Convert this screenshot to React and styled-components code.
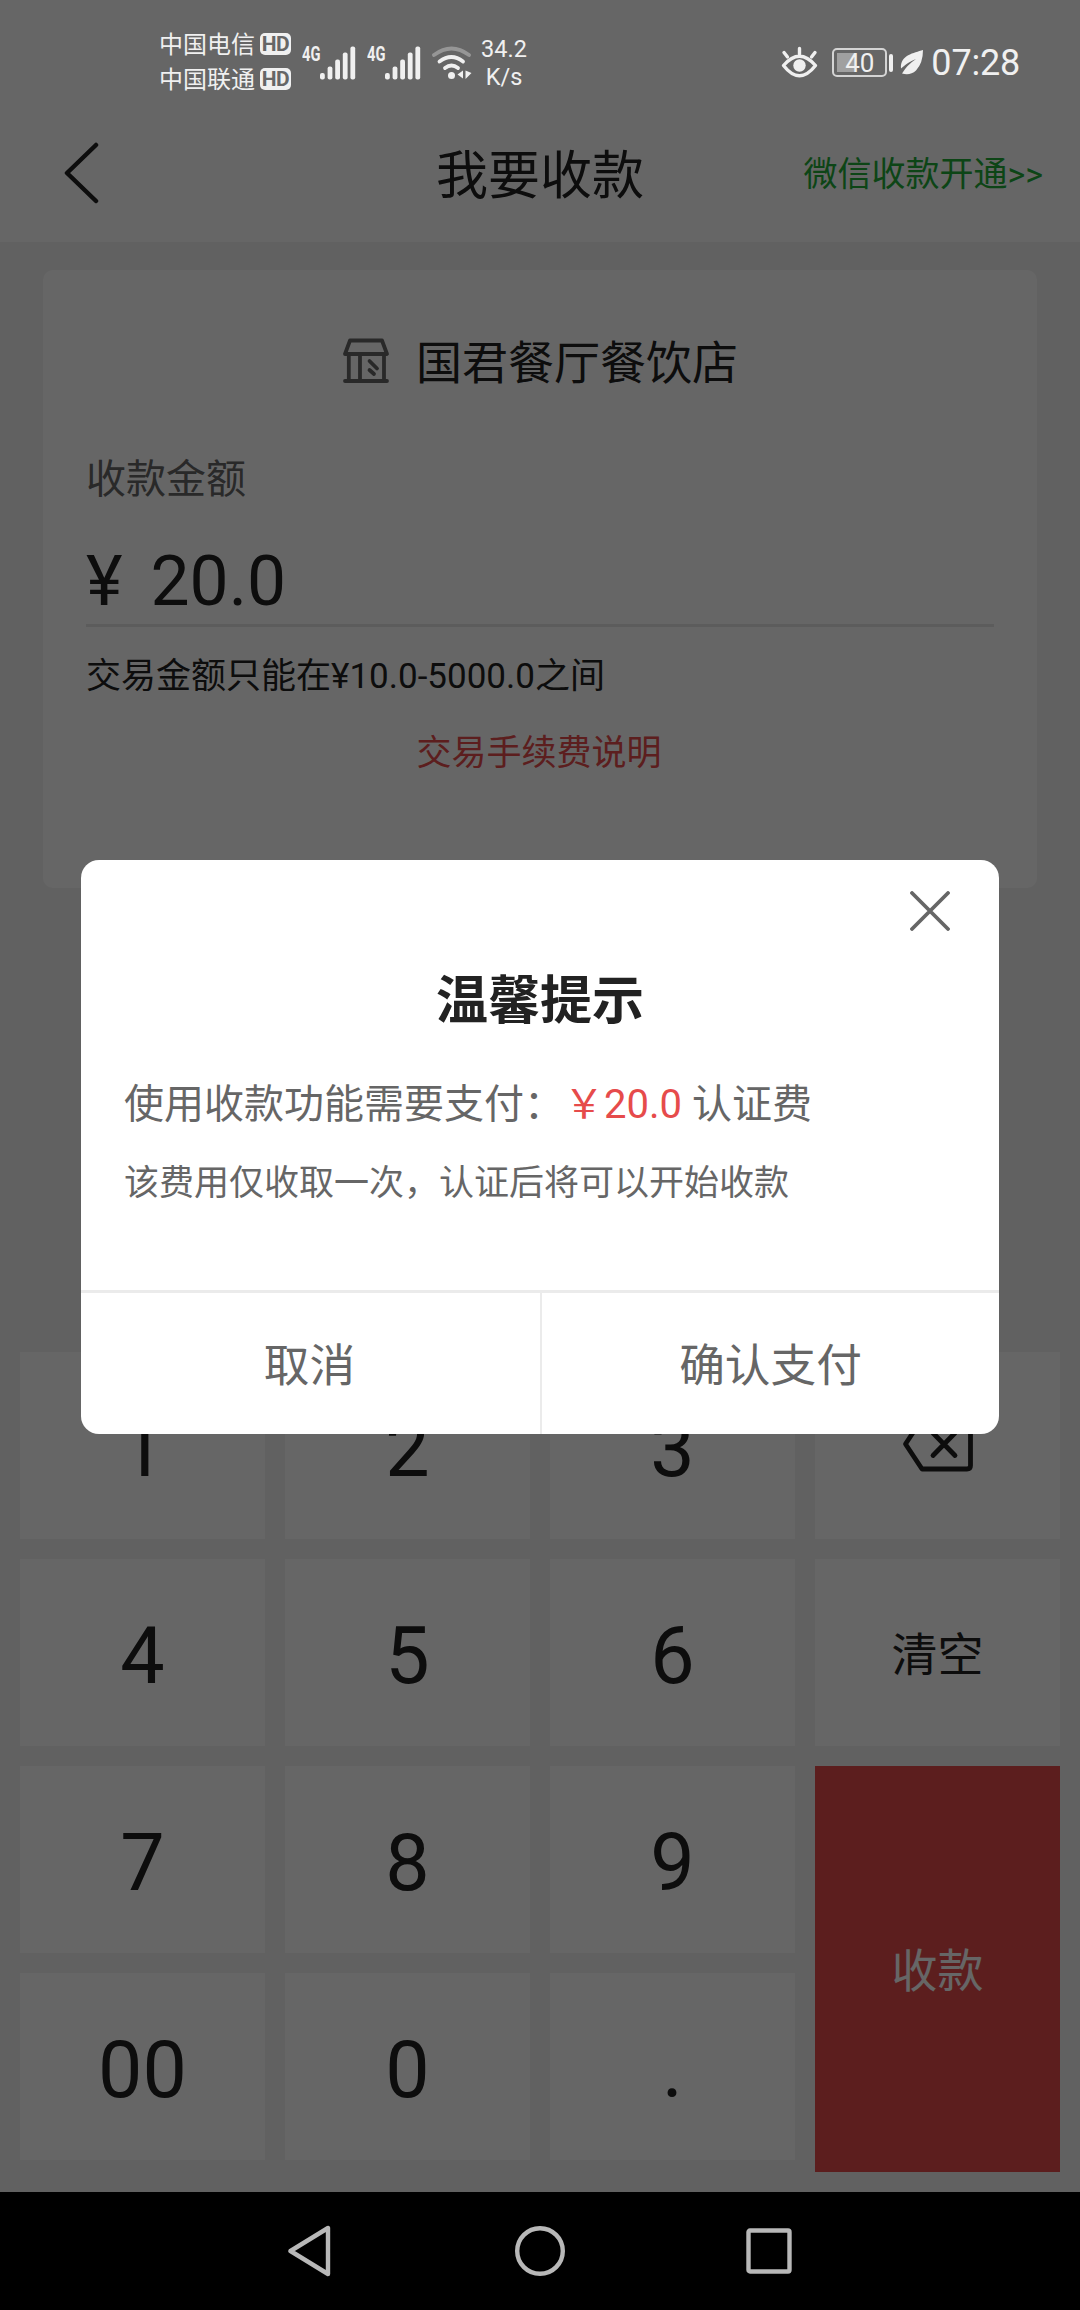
import styled, { createGlobalStyle, ThemeProvider } from 'styled-components'

const theme = {
  colors: {
    page: '#f3f3f3',
    card: '#ffffff',
    text: '#222222',
    muted: '#666666',
    line: '#ebebeb',
    red: '#e64b4b',
    link: '#22ac38',
    status: '#f0f0f0',
    nav: '#b8b8b8',
  },
  fonts: {
    body: "Roboto, 'Noto Sans CJK SC', sans-serif",
  },
}

const GlobalStyle = createGlobalStyle`
  * { box-sizing: border-box; }
  body { margin: 0; background: #000; }
  button { border: 0; padding: 0; margin: 0; background: none; font: inherit; color: inherit; }
`

const Screen = styled.div`
  position: relative;
  display: flex;
  flex-direction: column;
  width: 1080px;
  height: 2310px;
  overflow: hidden;
  background: ${p => p.theme.colors.page};
  color: ${p => p.theme.colors.text};
  font-family: ${p => p.theme.fonts.body};
`

/* page */

const Header = styled.header`
  display: grid;
  grid-template-columns: 1fr auto 1fr;
  align-items: center;
  height: 242px;
  padding: 104px 37px 0;
  background: ${p => p.theme.colors.card};
`

const Back = styled.button`
  display: flex;
  margin-left: 26px;
`

const HeaderTitle = styled.h1`
  margin: 0;
  padding-top: 7px;
  font-size: 52px;
  font-weight: 400;
  line-height: 60px;
`

const HeaderLink = styled.a`
  justify-self: end;
  padding-top: 2px;
  font-size: 34px;
  line-height: 40px;
  color: ${p => p.theme.colors.link};
`

const Card = styled.section`
  display: flex;
  flex-direction: column;
  height: 618px;
  margin: 28px 43px 0;
  padding: 63px 43px 0;
  border-radius: 10px;
  background: ${p => p.theme.colors.card};
`

const Shop = styled.div`
  display: flex;
  align-items: center;
  justify-content: center;
  gap: 26px;
  height: 56px;
  font-size: 46px;
`

const ShopName = styled.span`
  padding-top: 4px;
  line-height: 56px;
`

const Label = styled.div`
  margin-top: 66px;
  font-size: 40px;
  line-height: 50px;
  color: ${p => p.theme.colors.muted};
`

const Amount = styled.div`
  display: flex;
  gap: 28px;
  height: 90px;
  margin-top: 34px;
  padding-bottom: 4px;
  font-size: 69.500px;
  line-height: 86px;
`

const Rule = styled.div`
  height: 3px;
  margin-top: -5px;
  background: #e6e6e6;
`

const Tip = styled.div`
  margin-top: 28px;
  font-size: 35px;
  line-height: 44px;
`

const FeeLink = styled.a`
  align-self: center;
  margin: 33px 2px 0 0;
  font-size: 35px;
  line-height: 44px;
  color: ${p => p.theme.colors.red};
`

const Keypad = styled.div`
  display: grid;
  grid-template-columns: repeat(4, 1fr);
  grid-template-rows: repeat(4, 187px);
  gap: 20px;
  margin-top: auto;
  padding: 0 20px 32px;
`

const Key = styled.button`
  display: flex;
  align-items: center;
  justify-content: center;
  padding-top: ${p => p.$small ? 4 : 8}px;
  font-size: ${p => p.$small ? 46 : 79}px;
  line-height: 1;
  background: ${p => p.theme.colors.card};
`

const IconKey = styled(Key)`
  padding: 0 0 3px;
`

const PayKey = styled(Key)`
  grid-column: 4;
  grid-row: 3 / span 2;
  margin-bottom: -12px;
  color: #fff;
  background: ${p => p.theme.colors.red};
`

/* system bars */

const NavBar = styled.nav`
  display: flex;
  align-items: center;
  justify-content: center;
  gap: 180px;
  height: 118px;
  flex-shrink: 0;
  background: #000;
`

const StatusBar = styled.div`
  position: absolute;
  inset: 0 0 auto;
  z-index: 3;
  display: flex;
  align-items: center;
  height: 125px;
  padding: 0 60px 0 159px;
  color: ${p => p.theme.colors.status};
`

const Carriers = styled.div`
  display: flex;
  flex-direction: column;
  gap: 5px;
  margin-right: 11px;
`

const Carrier = styled.div`
  display: flex;
  align-items: center;
  gap: 5px;
  height: 30px;
  font-size: 24px;
  line-height: 30px;
`

const Hd = styled.span`
  width: 31px;
  height: 22px;
  margin-bottom: 2px;
  border-radius: 5px;
  background: ${p => p.theme.colors.status};
  color: #666;
  font-size: 21px;
  font-weight: 700;
  line-height: 23px;
  letter-spacing: -0.5px;
  text-align: center;
`

const Signal = styled.div`
  display: flex;
  align-items: flex-start;
  height: 34px;
  margin-right: 11px;
`

const NetType = styled.span`
  width: 18px;
  font-size: 21px;
  font-weight: 700;
  line-height: 17px;
  transform: scaleX(0.7);
  transform-origin: left;
`

const Speed = styled.div`
  width: 50px;
  margin-left: 7px;
  font-size: 23.500px;
  line-height: 28px;
  text-align: center;
`

const StatusRight = styled.div`
  display: flex;
  align-items: center;
  margin-left: auto;
`

const Battery = styled.div`
  display: flex;
  align-items: center;
  gap: 2px;
  margin: 0 7px 0 14px;
  &::after {
    content: '';
    width: 4px;
    height: 18px;
    border-radius: 2px;
    background: ${p => p.theme.colors.status};
  }
`

const BatteryCell = styled.span`
  width: 55px;
  height: 29px;
  border: 2px solid #d4d4d4;
  border-radius: 5px;
  background: linear-gradient(#a0a0a0, #a0a0a0) 3px 3px / 19px 19px no-repeat;
  font-size: 26px;
  line-height: 26px;
  text-align: center;
`

const Clock = styled.span`
  margin-left: 7px;
  font-size: 36px;
  line-height: 40px;
  letter-spacing: -0.2px;
`

/* dialog */

const Overlay = styled.div`
  position: absolute;
  inset: 0 0 118px;
  z-index: 2;
  display: flex;
  justify-content: center;
  align-items: flex-start;
  padding-top: 860px;
  background: rgba(0, 0, 0, 0.6);
`

const Dialog = styled.div`
  display: flex;
  flex-direction: column;
  width: 918px;
  height: 574px;
  border-radius: 18px;
  background: #fff;
  overflow: hidden;
`

const Close = styled.button`
  display: flex;
  align-self: flex-end;
  margin: 31px 49px 0 0;
`

const DialogTitle = styled.h2`
  margin: 39px 0 0;
  font-size: 52px;
  font-weight: 700;
  line-height: 64px;
  text-align: center;
`

const DialogText = styled.p`
  margin: ${p => p.$small ? 27 : 45}px 0 0 43px;
  font-size: ${p => p.$small ? 35 : 40}px;
  line-height: 52px;
  color: ${p => p.theme.colors.muted};
  white-space: nowrap;
`

const Price = styled.span`
  color: ${p => p.theme.colors.red};
`

const Actions = styled.div`
  display: flex;
  height: 144px;
  margin-top: auto;
  border-top: 3px solid ${p => p.theme.colors.line};
`

const Action = styled.button`
  flex: 1;
  padding: 0 2px 4px 0;
  font-size: 45.700px;
  color: ${p => p.theme.colors.muted};
  & + & {
    padding-right: 0;
    border-left: 2px solid ${p => p.theme.colors.line};
  }
`

const ShopIcon = () => (
  <svg width="48" height="46" viewBox="0 0 48 46" fill="none" stroke="#666" strokeWidth="3.800" strokeLinejoin="round" strokeLinecap="round">
    <path d="M8 2.500H40L45 16H3ZM6.800 16V43M42 16V43M18 16V43M3 43H45" />
    <path d="M27.500 23L35 30.500M27.500 32L32 36" />
  </svg>
)

const BackspaceIcon = () => (
  <svg width="72" height="56" viewBox="0 0 72 56" fill="none" stroke="#222" strokeWidth="4.800" strokeLinejoin="round" strokeLinecap="round">
    <path d="M20 3H65Q68.500 3 68.500 6.500V49.500Q68.500 53 65 53H20L3.500 28Z" />
    <path d="M31 17L53 39.500M53 17L31 39.500" />
  </svg>
)

const Bars = () => (
  <svg width="36" height="34" viewBox="0 0 36 34" fill="currentColor">
    {[6.500, 13, 20, 27, 33].map((h, i) => (
      <rect key={h} x={i * 7.600} y={33.500 - h} width="4.800" height={h} rx="2" />
    ))}
  </svg>
)

const WifiIcon = () => (
  <svg width="40" height="34" viewBox="0 0 40 34" fill="none" stroke="currentColor" strokeWidth="3.800" strokeLinecap="round">
    <path d="M2 9Q19.500 -4 37 9" opacity="0.35" />
    <path d="M7.500 15.500Q19.500 6.500 31 15.500M13 22Q19.500 17 26 22" />
    <circle cx="19.500" cy="29.500" r="3.500" fill="currentColor" stroke="none" />
    <path d="M31 24.500V32.500L25.500 28.500ZM33.500 24.500L39.500 27L33.500 33Z" fill="currentColor" stroke="none" />
  </svg>
)

const EyeIcon = () => (
  <svg width="37" height="34" viewBox="0 0 37 34" fill="none" stroke="currentColor" strokeWidth="3.400" strokeLinecap="round">
    <path d="M2.500 19.500Q18.500 1 34.500 19.500Q18.500 40 2.500 19.500Z" strokeLinejoin="round" />
    <path d="M18.500 2.500V8M3 6.500L6.500 11M34 6.500L30.500 11" />
    <circle cx="18.500" cy="19.500" r="6.200" fill="currentColor" stroke="none" />
  </svg>
)

const LeafIcon = () => (
  <svg width="24" height="26" viewBox="0 0 24 26" fill="currentColor">
    <path d="M23 0C14 3 0 5 1 18.500Q8 12 16 9Q7 15 2 23.500Q10 26 16 20.500Q23 13 23 0Z" />
  </svg>
)

const KEYS = ['1', '2', '3', 'back', '4', '5', '6', '清空', '7', '8', '9', '00', '0', '.']
const CARRIERS = ['中国电信', '中国联通']

export default function App() {
  return (
    <ThemeProvider theme={theme}>
      <GlobalStyle />
      <Screen>
        <StatusBar>
          <Carriers>
            {CARRIERS.map(name => (
              <Carrier key={name}>{name}<Hd>HD</Hd></Carrier>
            ))}
          </Carriers>
          <Signal><NetType>4G</NetType><Bars /></Signal>
          <Signal><NetType>4G</NetType><Bars /></Signal>
          <WifiIcon />
          <Speed>34.2<br />K/s</Speed>
          <StatusRight>
            <EyeIcon />
            <Battery><BatteryCell>40</BatteryCell></Battery>
            <LeafIcon />
            <Clock>07:28</Clock>
          </StatusRight>
        </StatusBar>

        <Header>
          <Back aria-label="返回">
            <svg width="38" height="62" viewBox="0 0 38 62" fill="none" stroke="#222" strokeWidth="4.500" strokeLinecap="round" strokeLinejoin="round">
              <path d="M33 3L4 31L33 59" />
            </svg>
          </Back>
          <HeaderTitle>我要收款</HeaderTitle>
          <HeaderLink>微信收款开通&gt;&gt;</HeaderLink>
        </Header>

        <Card>
          <Shop><ShopIcon /><ShopName>国君餐厅餐饮店</ShopName></Shop>
          <Label>收款金额</Label>
          <Amount><span>¥</span><span>20.0</span></Amount>
          <Rule />
          <Tip>交易金额只能在¥10.0-5000.0之间</Tip>
          <FeeLink>交易手续费说明</FeeLink>
        </Card>

        <Keypad>
          {KEYS.map(k => k === 'back'
            ? <IconKey key={k} aria-label="退格"><BackspaceIcon /></IconKey>
            : <Key key={k} $small={k === '清空'}>{k}</Key>
          )}
          <PayKey $small>收款</PayKey>
        </Keypad>

        <NavBar>
          <svg width="46" height="52" viewBox="2 0 46 52" fill="none" stroke={theme.colors.nav} strokeWidth="4.400" strokeLinejoin="round">
            <path d="M42 3V49L4.500 26Z" />
          </svg>
          <svg width="52" height="52" viewBox="0 0 52 52" fill="none" stroke={theme.colors.nav} strokeWidth="4.400">
            <circle cx="26" cy="26" r="22.800" />
          </svg>
          <svg width="46" height="46" viewBox="0 0 46 46" fill="none" stroke={theme.colors.nav} strokeWidth="4.400">
            <rect x="2.500" y="2.500" width="41" height="41" rx="1.500" />
          </svg>
        </NavBar>

        <Overlay>
          <Dialog role="dialog">
            <Close aria-label="关闭">
              <svg width="40" height="40" viewBox="0 0 40 40" fill="none" stroke="#666" strokeWidth="3.800" strokeLinecap="round">
                <path d="M2 2L38 38M38 2L2 38" />
              </svg>
            </Close>
            <DialogTitle>温馨提示</DialogTitle>
            <DialogText>使用收款功能需要支付：<Price>￥20.0</Price> 认证费</DialogText>
            <DialogText $small>该费用仅收取一次，认证后将可以开始收款</DialogText>
            <Actions>
              <Action>取消</Action>
              <Action>确认支付</Action>
            </Actions>
          </Dialog>
        </Overlay>
      </Screen>
    </ThemeProvider>
  )
}
